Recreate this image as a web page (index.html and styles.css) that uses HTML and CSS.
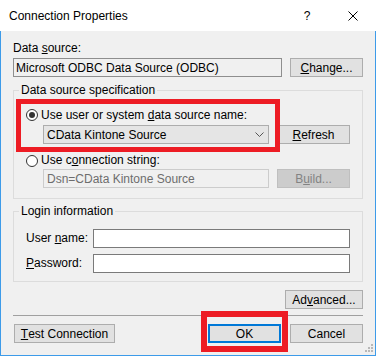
FILE: index.html
```html
<!DOCTYPE html>
<html>
<head>
<meta charset="utf-8">
<link rel="stylesheet" href="styles.css">
</head>
<body>
<div class="window">
  <div class="titlebar">
    <span class="title">Connection Properties</span>
    <span class="cap-btn">?</span>
    <span class="cap-btn">
      <svg width="10" height="10" viewBox="0 0 10 10"><path d="M0.5 0.5 L9.5 9.5 M9.5 0.5 L0.5 9.5" stroke="#000" stroke-width="1" fill="none"/></svg>
    </span>
  </div>
  <div class="body">
    <div class="line-label">Data <u>s</u>ource:</div>
    <div class="ds-row">
      <div class="field readonly">Microsoft ODBC Data Source (ODBC)</div>
      <div class="btn w73"><u>C</u>hange...</div>
    </div>

    <fieldset class="group spec">
      <legend>Data source specification</legend>
      <div class="radio-row">
        <span class="radio checked"></span>
        <span>Use user or system <u>d</u>ata source name:</span>
      </div>
      <div class="sub-row first">
        <div class="combo">
          <span class="combo-text">CData Kintone Source</span>
          <svg class="chev" width="9" height="5" viewBox="0 0 9 5"><path d="M0.5 0.5 L4.5 4.5 L8.5 0.5" stroke="#555" stroke-width="1" fill="none"/></svg>
        </div>
        <div class="btn w73"><u>R</u>efresh</div>
      </div>
      <div class="radio-row second">
        <span class="radio"></span>
        <span>Use c<u>o</u>nnection string:</span>
      </div>
      <div class="sub-row last">
        <div class="field disabled">Dsn=CData Kintone Source</div>
        <div class="btn w73 btn-disabled">B<u>u</u>ild...</div>
      </div>
    </fieldset>

    <fieldset class="group login">
      <legend>Login information</legend>
      <div class="form-row">
        <span class="form-label">User <u>n</u>ame:</span>
        <div class="field input"></div>
      </div>
      <div class="form-row pw">
        <span class="form-label"><u>P</u>assword:</span>
        <div class="field input"></div>
      </div>
    </fieldset>

    <div class="adv-row">
      <div class="btn w78">Ad<u>v</u>anced...</div>
    </div>
    <div class="separator"></div>
    <div class="bottom-row">
      <div class="btn test"><u>T</u>est Connection</div>
      <div class="spacer"></div>
      <div class="btn w73 default">OK</div>
      <div class="btn w73">Cancel</div>
    </div>
  </div>

  <div class="highlight hl-source"></div>
  <div class="highlight hl-ok"></div>
  <svg class="grip" width="9" height="9" viewBox="0 0 9 9">
    <rect x="6" y="0" width="2" height="2" fill="#b8b8b8"/>
    <rect x="3" y="3" width="2" height="2" fill="#b8b8b8"/>
    <rect x="6" y="3" width="2" height="2" fill="#b8b8b8"/>
    <rect x="0" y="6" width="2" height="2" fill="#b8b8b8"/>
    <rect x="3" y="6" width="2" height="2" fill="#b8b8b8"/>
    <rect x="6" y="6" width="2" height="2" fill="#b8b8b8"/>
  </svg>
</div>
</body>
</html>
```

FILE: styles.css
```css
* { box-sizing: border-box; }

html, body {
  margin: 0;
  padding: 0;
  background: #ffffff;
}

body {
  font-family: "Liberation Sans", Arial, sans-serif;
  font-size: 12px;
  line-height: 14px;
  color: #000;
}

.window {
  position: relative;
  width: 376px;
  height: 356px;
  display: flex;
  flex-direction: column;
}

.titlebar {
  height: 31px;
  flex: none;
  background: #ffffff;
  display: flex;
  align-items: center;
  padding-left: 9px;
}

.title { flex: 1; }

.cap-btn {
  width: 46px;
  height: 31px;
  display: flex;
  align-items: center;
  justify-content: center;
}

.body {
  flex: 1;
  background: #f0f0f0;
  border: 1px solid #3d9be9;
  border-top: none;
  padding: 10px 12px 0 12px;
  display: flex;
  flex-direction: column;
}

.line-label { height: 14px; }

u { text-underline-offset: 1px; }

.ds-row {
  display: flex;
  gap: 8px;
  margin-top: 3px;
  height: 19px;
}

.field {
  height: 19px;
  border: 1px solid #7a7a7a;
  background: #ffffff;
  padding: 1px 2px 0;
  white-space: nowrap;
  overflow: hidden;
  line-height: 16px;
}

.field.readonly {
  flex: 1;
  background: #f0f0f0;
  border-color: #8e8e8e;
}

.field.disabled {
  flex: 1;
  background: #f0f0f0;
  border-color: #cccccc;
  color: #6d6d6d;
  padding-left: 3px;
}

.field.input { flex: 1; }

.btn {
  height: 19px;
  background: #e1e1e1;
  border: 1px solid #adadad;
  display: flex;
  align-items: center;
  justify-content: center;
  flex: none;
  white-space: nowrap;
}

.w73 { width: 73px; }
.w78 { width: 78px; }

.btn-disabled {
  background: #cccccc;
  border-color: #bfbfbf;
  color: #838383;
}

.btn.default { border: 2px solid #0078d7; }

.btn.test {
  width: 101px;
  margin-left: 1px;
}

.group {
  margin: 0;
  border: 1px solid #dcdcdc;
  min-width: 0;
}

.group legend {
  padding: 0 2px;
  margin-left: -7px;
  line-height: 14px;
}

.group.spec {
  margin-top: 6px;
  padding: 11px 12px 10px;
}

.group.login {
  margin-top: 5px;
  padding: 11px 12px 8px;
}

.radio-row {
  height: 14px;
  display: flex;
  align-items: center;
  gap: 3px;
}

.radio-row.second { margin-top: 9px; }

.radio {
  width: 12px;
  height: 12px;
  border: 1px solid #333333;
  border-radius: 50%;
  background: #ffffff;
  display: flex;
  align-items: center;
  justify-content: center;
  flex: none;
}

.radio.checked::after {
  content: "";
  width: 6px;
  height: 6px;
  border-radius: 50%;
  background: #333333;
}

.radio-row.second .radio { margin-top: 2px; }

.sub-row {
  display: flex;
  gap: 8px;
  padding-left: 17px;
  height: 19px;
}

.sub-row.first { margin-top: 3px; }
.sub-row.last { margin-top: 2px; }

.combo {
  flex: 1;
  height: 19px;
  background: #e5e5e5;
  border: 1px solid #adadad;
  display: flex;
  align-items: center;
  padding-left: 3px;
  padding-right: 4px;
}

.combo-text { flex: 1; }

.form-row {
  display: flex;
  align-items: center;
  height: 19px;
}

.form-row.pw { margin-top: 6px; }

.form-label {
  width: 67px;
  flex: none;
  padding-bottom: 2px;
}

.adv-row {
  display: flex;
  justify-content: flex-end;
  margin-top: 8px;
}

.separator {
  height: 1px;
  background: #a0a0a0;
  margin-top: 6px;
}

.bottom-row {
  display: flex;
  gap: 9px;
  margin-top: 8px;
}

.spacer { flex: 1; }

.highlight {
  position: absolute;
  border-style: solid;
  border-color: #ed1c24;
}

.hl-source {
  left: 16px;
  top: 99px;
  width: 264px;
  height: 53px;
  border-width: 5px;
}

.hl-ok {
  left: 201px;
  top: 311px;
  width: 87px;
  height: 41px;
  border-width: 6px;
}

.grip {
  position: absolute;
  left: 365px;
  top: 344px;
}
```
